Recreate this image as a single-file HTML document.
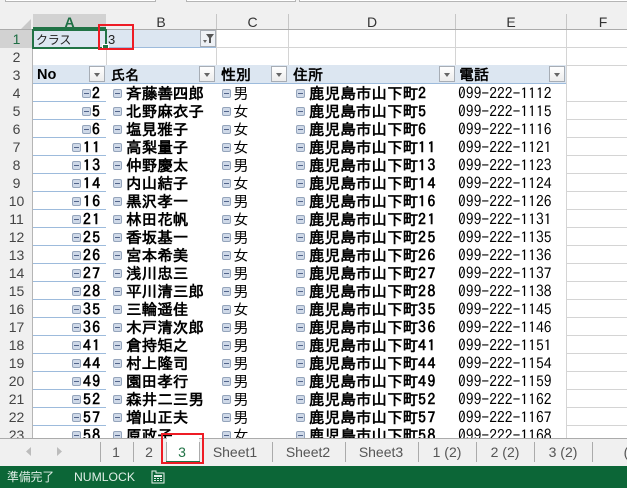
<!DOCTYPE html>
<html lang="ja">
<head>
<meta charset="utf-8">
<style>
html,body{margin:0;padding:0;background:#fff}
body{position:relative;width:627px;height:488px;overflow:hidden;font-family:"IPAGothic","Noto Sans CJK JP",sans-serif;color:#000}
.ch{position:absolute;top:14px;height:15px;line-height:16px;text-align:center;font:14px/16px "Liberation Sans",sans-serif;color:#333;border-right:1px solid #c6c6c6;box-sizing:border-box}
.rn{position:absolute;left:0;width:33px;height:18px;text-align:center;font:14px/18px "Liberation Sans",sans-serif;color:#444}
#sheet{position:absolute;left:0;top:84px;width:627px;height:354px;overflow:hidden}
.r{position:absolute;left:0;width:627px;height:18px;font-size:15.6px;line-height:18px;white-space:nowrap}
.r span,.r b{position:absolute;top:0}
.r b.n{letter-spacing:1.4px}
.r b.d{left:309px}
.r i{font-style:normal;letter-spacing:1.6px}
.r .i{width:9px;height:9px;top:5px;background:#cfd9e8;border:1px solid #94a4bb;border-radius:2px;box-sizing:border-box}
.r .i:after{content:"";position:absolute;left:1px;top:3px;width:5px;height:1px;background:#52648a}
.l{position:absolute;left:33px;width:73px;height:1px;background:#9dbbdc}
.g{position:absolute;left:567px;width:60px;height:1px;background:#d4d4d4}
.hdr{position:absolute;top:65px;height:18px;background:#dce6f1;font-weight:bold;font-size:15px;line-height:20px;white-space:nowrap}
.fb{position:absolute;top:66px;width:16px;height:16px;background:linear-gradient(#fff,#ececec);border:1px solid #a7adb5;box-sizing:border-box}
.fb:after{content:"";position:absolute;left:4px;top:6px;border-left:3.5px solid transparent;border-right:3.5px solid transparent;border-top:4px solid #666}
.t{position:absolute;top:442px;height:19px;font:14px/20px "Liberation Sans",sans-serif;color:#555;transform:translateX(-50%);white-space:nowrap}
.s{position:absolute;top:442px;width:1px;height:20px;background:#ababab}
</style>
</head>
<body>
<!-- formula bar remnant -->
<div style="position:absolute;left:0;top:0;width:627px;height:29px;background:#f0f0f0"></div>
<div style="position:absolute;left:5px;top:-2px;width:151px;height:4px;background:#fff;border:1px solid #b5b5b5;box-sizing:border-box"></div>
<div style="position:absolute;left:186px;top:-2px;width:110px;height:4px;background:#fff;border:1px solid #b5b5b5;box-sizing:border-box"></div>
<div style="position:absolute;left:299px;top:-2px;width:330px;height:4px;background:#fff;border:1px solid #b5b5b5;box-sizing:border-box"></div>

<!-- column headers -->
<div style="position:absolute;left:20px;top:19px;width:0;height:0;border-left:11px solid transparent;border-bottom:11px solid #c9c9c9"></div>
<div class="ch" style="left:33px;width:73px;background:#d2d2d2;color:#1f6f45;font-weight:bold;border-right:0">A</div>
<div class="ch" style="left:106px;width:111px">B</div>
<div class="ch" style="left:217px;width:72px">C</div>
<div class="ch" style="left:289px;width:167px">D</div>
<div class="ch" style="left:456px;width:111px">E</div>
<div class="ch" style="left:567px;width:72px;border:0">F</div>
<div style="position:absolute;left:0;top:29px;width:627px;height:1px;background:#ababab"></div>

<!-- row headers -->
<div style="position:absolute;left:0;top:30px;width:33px;height:408px;background:#f0f0f0;border-right:1px solid #b5b5b5;box-sizing:border-box;overflow:hidden">
<div style="position:absolute;left:0;top:0;width:33px;height:18px;background:#d2d2d2"></div>
<div class="rn" style="top:0;color:#1f6f45">1</div>
<div class="rn" style="top:18px">2</div>
<div class="rn" style="top:36px">3</div>
<div class="rn" style="top:54px">4</div>
<div class="rn" style="top:72px">5</div>
<div class="rn" style="top:90px">6</div>
<div class="rn" style="top:108px">7</div>
<div class="rn" style="top:126px">8</div>
<div class="rn" style="top:144px">9</div>
<div class="rn" style="top:162px">10</div>
<div class="rn" style="top:180px">11</div>
<div class="rn" style="top:198px">12</div>
<div class="rn" style="top:216px">13</div>
<div class="rn" style="top:234px">14</div>
<div class="rn" style="top:252px">15</div>
<div class="rn" style="top:270px">16</div>
<div class="rn" style="top:288px">17</div>
<div class="rn" style="top:306px">18</div>
<div class="rn" style="top:324px">19</div>
<div class="rn" style="top:342px">20</div>
<div class="rn" style="top:360px">21</div>
<div class="rn" style="top:378px">22</div>
<div class="rn" style="top:396px">23</div>
</div>

<!-- rows 1-3 grid -->
<div style="position:absolute;left:33px;top:30px;width:183px;height:17px;background:#dce6f1"></div>
<div style="position:absolute;left:33px;top:47px;width:183px;height:1px;background:#9dbbdc"></div>
<div style="position:absolute;left:216px;top:47px;width:411px;height:1px;background:#d4d4d4"></div>
<div style="position:absolute;left:106px;top:30px;width:1px;height:35px;background:#d4d4d4"></div>
<div style="position:absolute;left:216px;top:30px;width:1px;height:35px;background:#d4d4d4"></div>
<div style="position:absolute;left:288px;top:30px;width:1px;height:35px;background:#d4d4d4"></div>
<div style="position:absolute;left:455px;top:30px;width:1px;height:35px;background:#d4d4d4"></div>
<div style="position:absolute;left:566px;top:30px;width:1px;height:408px;background:#d4d4d4"></div>
<div style="position:absolute;left:567px;top:65px;width:60px;height:1px;background:#d4d4d4"></div>

<div style="position:absolute;left:36px;top:30px;font:12px/19px 'Noto Sans CJK JP',sans-serif;color:#222;letter-spacing:-.2px">クラス</div>
<div style="position:absolute;left:108px;top:30px;font:13px/20px 'Liberation Sans',sans-serif;color:#222">3</div>

<!-- B1 slicer filter -->
<div style="position:absolute;left:200px;top:30px;width:16px;height:17px;background:#eef1f5;border:1px solid #a7adb5;box-sizing:border-box">
<svg width="14" height="15" style="position:absolute;left:0;top:0"><path d="M5 3h8L10 7v5H8V7z" fill="#555"/><path d="M2 9h4L4 12z" fill="#666"/></svg>
</div>

<!-- row 3 header -->
<div class="hdr" style="left:33px;width:533px"></div>
<div style="position:absolute;left:33px;top:83px;width:533px;height:1px;background:#9dbbdc"></div>
<div class="hdr" style="left:37px;background:none;font:bold 14.5px/20px 'Liberation Sans',sans-serif">No</div>
<div class="hdr" style="left:111px;background:none;font-size:14px">氏名</div>
<div class="hdr" style="left:221px;background:none">性別</div>
<div class="hdr" style="left:293px;background:none">住所</div>
<div class="hdr" style="left:459px;background:none">電話</div>
<div class="fb" style="left:89px"></div>
<div class="fb" style="left:199px"></div>
<div class="fb" style="left:271px"></div>
<div class="fb" style="left:439px"></div>
<div class="fb" style="left:549px"></div>

<!-- data rows -->
<div id="sheet">
<div class="l" style="top:17px"></div><div class="l" style="top:35px"></div><div class="l" style="top:53px"></div><div class="l" style="top:71px"></div><div class="l" style="top:89px"></div><div class="l" style="top:107px"></div><div class="l" style="top:125px"></div><div class="l" style="top:143px"></div><div class="l" style="top:161px"></div><div class="l" style="top:179px"></div><div class="l" style="top:197px"></div><div class="l" style="top:215px"></div><div class="l" style="top:233px"></div><div class="l" style="top:251px"></div><div class="l" style="top:269px"></div><div class="l" style="top:287px"></div><div class="l" style="top:305px"></div><div class="l" style="top:323px"></div><div class="l" style="top:341px"></div>
<div class="g" style="top:17px"></div><div class="g" style="top:35px"></div><div class="g" style="top:53px"></div><div class="g" style="top:71px"></div><div class="g" style="top:89px"></div><div class="g" style="top:107px"></div><div class="g" style="top:125px"></div><div class="g" style="top:143px"></div><div class="g" style="top:161px"></div><div class="g" style="top:179px"></div><div class="g" style="top:197px"></div><div class="g" style="top:215px"></div><div class="g" style="top:233px"></div><div class="g" style="top:251px"></div><div class="g" style="top:269px"></div><div class="g" style="top:287px"></div><div class="g" style="top:305px"></div><div class="g" style="top:323px"></div><div class="g" style="top:341px"></div>

<div class="r" style="top:0"><span class="i" style="left:82px"></span><b class="n" style="left:92px">2</b><span class="i" style="left:113px"></span><b style="left:126px">斉藤善四郎</b><span class="i" style="left:222px"></span><span style="left:233px">男</span><span class="i" style="left:296px"></span><b class="d">鹿児島市山下町<i>2</i></b><span style="left:458px">099-222-1112</span></div>
<div class="r" style="top:18px"><span class="i" style="left:82px"></span><b class="n" style="left:92px">5</b><span class="i" style="left:113px"></span><b style="left:126px">北野麻衣子</b><span class="i" style="left:222px"></span><span style="left:233px">女</span><span class="i" style="left:296px"></span><b class="d">鹿児島市山下町<i>5</i></b><span style="left:458px">099-222-1115</span></div>
<div class="r" style="top:36px"><span class="i" style="left:82px"></span><b class="n" style="left:92px">6</b><span class="i" style="left:113px"></span><b style="left:126px">塩見雅子</b><span class="i" style="left:222px"></span><span style="left:233px">女</span><span class="i" style="left:296px"></span><b class="d">鹿児島市山下町<i>6</i></b><span style="left:458px">099-222-1116</span></div>
<div class="r" style="top:54px"><span class="i" style="left:72px"></span><b class="n" style="left:83px">11</b><span class="i" style="left:113px"></span><b style="left:126px">高梨量子</b><span class="i" style="left:222px"></span><span style="left:233px">女</span><span class="i" style="left:296px"></span><b class="d">鹿児島市山下町<i>11</i></b><span style="left:458px">099-222-1121</span></div>
<div class="r" style="top:72px"><span class="i" style="left:72px"></span><b class="n" style="left:83px">13</b><span class="i" style="left:113px"></span><b style="left:126px">仲野慶太</b><span class="i" style="left:222px"></span><span style="left:233px">男</span><span class="i" style="left:296px"></span><b class="d">鹿児島市山下町<i>13</i></b><span style="left:458px">099-222-1123</span></div>
<div class="r" style="top:90px"><span class="i" style="left:72px"></span><b class="n" style="left:83px">14</b><span class="i" style="left:113px"></span><b style="left:126px">内山結子</b><span class="i" style="left:222px"></span><span style="left:233px">女</span><span class="i" style="left:296px"></span><b class="d">鹿児島市山下町<i>14</i></b><span style="left:458px">099-222-1124</span></div>
<div class="r" style="top:108px"><span class="i" style="left:72px"></span><b class="n" style="left:83px">16</b><span class="i" style="left:113px"></span><b style="left:126px">黒沢孝一</b><span class="i" style="left:222px"></span><span style="left:233px">男</span><span class="i" style="left:296px"></span><b class="d">鹿児島市山下町<i>16</i></b><span style="left:458px">099-222-1126</span></div>
<div class="r" style="top:126px"><span class="i" style="left:72px"></span><b class="n" style="left:83px">21</b><span class="i" style="left:113px"></span><b style="left:126px">林田花帆</b><span class="i" style="left:222px"></span><span style="left:233px">女</span><span class="i" style="left:296px"></span><b class="d">鹿児島市山下町<i>21</i></b><span style="left:458px">099-222-1131</span></div>
<div class="r" style="top:144px"><span class="i" style="left:72px"></span><b class="n" style="left:83px">25</b><span class="i" style="left:113px"></span><b style="left:126px">香坂基一</b><span class="i" style="left:222px"></span><span style="left:233px">男</span><span class="i" style="left:296px"></span><b class="d">鹿児島市山下町<i>25</i></b><span style="left:458px">099-222-1135</span></div>
<div class="r" style="top:162px"><span class="i" style="left:72px"></span><b class="n" style="left:83px">26</b><span class="i" style="left:113px"></span><b style="left:126px">宮本希美</b><span class="i" style="left:222px"></span><span style="left:233px">女</span><span class="i" style="left:296px"></span><b class="d">鹿児島市山下町<i>26</i></b><span style="left:458px">099-222-1136</span></div>
<div class="r" style="top:180px"><span class="i" style="left:72px"></span><b class="n" style="left:83px">27</b><span class="i" style="left:113px"></span><b style="left:126px">浅川忠三</b><span class="i" style="left:222px"></span><span style="left:233px">男</span><span class="i" style="left:296px"></span><b class="d">鹿児島市山下町<i>27</i></b><span style="left:458px">099-222-1137</span></div>
<div class="r" style="top:198px"><span class="i" style="left:72px"></span><b class="n" style="left:83px">28</b><span class="i" style="left:113px"></span><b style="left:126px">平川清三郎</b><span class="i" style="left:222px"></span><span style="left:233px">男</span><span class="i" style="left:296px"></span><b class="d">鹿児島市山下町<i>28</i></b><span style="left:458px">099-222-1138</span></div>
<div class="r" style="top:216px"><span class="i" style="left:72px"></span><b class="n" style="left:83px">35</b><span class="i" style="left:113px"></span><b style="left:126px">三輪遥佳</b><span class="i" style="left:222px"></span><span style="left:233px">女</span><span class="i" style="left:296px"></span><b class="d">鹿児島市山下町<i>35</i></b><span style="left:458px">099-222-1145</span></div>
<div class="r" style="top:234px"><span class="i" style="left:72px"></span><b class="n" style="left:83px">36</b><span class="i" style="left:113px"></span><b style="left:126px">木戸清次郎</b><span class="i" style="left:222px"></span><span style="left:233px">男</span><span class="i" style="left:296px"></span><b class="d">鹿児島市山下町<i>36</i></b><span style="left:458px">099-222-1146</span></div>
<div class="r" style="top:252px"><span class="i" style="left:72px"></span><b class="n" style="left:83px">41</b><span class="i" style="left:113px"></span><b style="left:126px">倉持矩之</b><span class="i" style="left:222px"></span><span style="left:233px">男</span><span class="i" style="left:296px"></span><b class="d">鹿児島市山下町<i>41</i></b><span style="left:458px">099-222-1151</span></div>
<div class="r" style="top:270px"><span class="i" style="left:72px"></span><b class="n" style="left:83px">44</b><span class="i" style="left:113px"></span><b style="left:126px">村上隆司</b><span class="i" style="left:222px"></span><span style="left:233px">男</span><span class="i" style="left:296px"></span><b class="d">鹿児島市山下町<i>44</i></b><span style="left:458px">099-222-1154</span></div>
<div class="r" style="top:288px"><span class="i" style="left:72px"></span><b class="n" style="left:83px">49</b><span class="i" style="left:113px"></span><b style="left:126px">園田孝行</b><span class="i" style="left:222px"></span><span style="left:233px">男</span><span class="i" style="left:296px"></span><b class="d">鹿児島市山下町<i>49</i></b><span style="left:458px">099-222-1159</span></div>
<div class="r" style="top:306px"><span class="i" style="left:72px"></span><b class="n" style="left:83px">52</b><span class="i" style="left:113px"></span><b style="left:126px">森井二三男</b><span class="i" style="left:222px"></span><span style="left:233px">男</span><span class="i" style="left:296px"></span><b class="d">鹿児島市山下町<i>52</i></b><span style="left:458px">099-222-1162</span></div>
<div class="r" style="top:324px"><span class="i" style="left:72px"></span><b class="n" style="left:83px">57</b><span class="i" style="left:113px"></span><b style="left:126px">増山正夫</b><span class="i" style="left:222px"></span><span style="left:233px">男</span><span class="i" style="left:296px"></span><b class="d">鹿児島市山下町<i>57</i></b><span style="left:458px">099-222-1167</span></div>
<div class="r" style="top:342px"><span class="i" style="left:72px"></span><b class="n" style="left:83px">58</b><span class="i" style="left:113px"></span><b style="left:126px">原政子</b><span class="i" style="left:222px"></span><span style="left:233px">女</span><span class="i" style="left:296px"></span><b class="d">鹿児島市山下町<i>58</i></b><span style="left:458px">099-222-1168</span></div>
</div>

<!-- selection -->
<div style="position:absolute;left:33px;top:27px;width:73px;height:2px;background:#217346"></div>
<div style="position:absolute;left:32px;top:29px;width:75px;height:20px;border:2px solid #217346;box-sizing:border-box"></div>
<div style="position:absolute;left:102px;top:44px;width:7px;height:6px;background:#217346;border:1px solid #fff;box-sizing:border-box"></div>
<div style="position:absolute;left:98px;top:24px;width:36px;height:26px;border:2px solid #ee1c25;box-sizing:border-box"></div>

<!-- tab bar -->
<div style="position:absolute;left:0;top:438px;width:627px;height:28px;background:#f0f0f0;border-top:1px solid #ababab;box-sizing:border-box"></div>
<svg width="60" height="14" style="position:absolute;left:25px;top:446px"><path d="M6 1v9L1 5.500z" fill="#bcbcbc"/><path d="M32 1v9l5-4.500z" fill="#bcbcbc"/></svg>
<div class="s" style="left:100px"></div><div class="s" style="left:133px"></div><div class="s" style="left:166px"></div><div class="s" style="left:199px"></div><div class="s" style="left:272px"></div><div class="s" style="left:345px"></div><div class="s" style="left:418px"></div><div class="s" style="left:476px"></div><div class="s" style="left:534px"></div><div class="s" style="left:592px"></div>
<div style="position:absolute;left:167px;top:438px;width:32px;height:25px;background:#fff"></div>
<div style="position:absolute;left:166px;top:461px;width:34px;height:2px;background:#217346"></div>
<div class="t" style="left:116px">1</div>
<div class="t" style="left:149px">2</div>
<div class="t" style="left:182px;color:#217346">3</div>
<div class="t" style="left:235px">Sheet1</div>
<div class="t" style="left:308px">Sheet2</div>
<div class="t" style="left:381px">Sheet3</div>
<div class="t" style="left:447px">1 (2)</div>
<div class="t" style="left:505px">2 (2)</div>
<div class="t" style="left:563px">3 (2)</div>
<div class="t" style="left:626px">(</div>
<div style="position:absolute;left:161px;top:433px;width:43px;height:31px;border:2px solid #ee1c25;box-sizing:border-box"></div>

<!-- status bar -->
<div style="position:absolute;left:0;top:466px;width:627px;height:22px;background:#0c6637"></div>
<div style="position:absolute;left:7px;top:467px;font:11.800px/20px 'Noto Sans CJK JP',sans-serif;color:#dfeee6">準備完了</div>
<div style="position:absolute;left:74px;top:467px;font:12.200px/20px 'Liberation Sans',sans-serif;color:#dfeee6">NUMLOCK</div>
<svg width="14" height="14" style="position:absolute;left:151px;top:470px"><path d="M1 1h4v2h8v10H1z" fill="none" stroke="#e6f1eb"/><path d="M3 5h8v2H3zM3 8h2v1H3zM6 8h2v1H6zM9 8h2v1H9zM3 10h2v1H3zM6 10h2v1H6zM9 10h2v1H9z" fill="#e6f1eb"/></svg>
</body>
</html>
